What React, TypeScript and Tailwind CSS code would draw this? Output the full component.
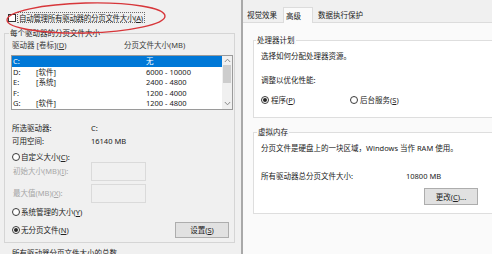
import React from "react";

const U = ({ c }: { c: string }) => <span className="underline">{c}</span>;

function Radio({ on }: { on?: boolean }) {
  return (
    <span className="flex h-[8px] w-[8px] shrink-0 items-center justify-center rounded-full border border-[#3a3a3a] bg-white">
      {on && <span className="h-[4px] w-[4px] rounded-full bg-[#262626]" />}
    </span>
  );
}

function Chevron({ up }: { up?: boolean }) {
  return (
    <svg width="7" height="5" viewBox="0 0 7 5">
      <polyline
        points={up ? "0.8,4 3.5,1.2 6.2,4" : "0.8,1 3.5,3.8 6.2,1"}
        fill="none"
        stroke="#8a8a8a"
        strokeWidth="1"
      />
    </svg>
  );
}

const rows = [
  { d: "C:", l: "", s: "无", sel: true },
  { d: "D:", l: "[软件]", s: "6000 - 10000" },
  { d: "E:", l: "[系统]", s: "2400 - 4800" },
  { d: "F:", l: "", s: "1200 - 4000" },
  { d: "G:", l: "[软件]", s: "1200 - 4800" },
];

export default function App() {
  return (
    <div className="flex h-[254px] w-[492px] overflow-hidden bg-[#f0f0f0] font-['Noto_Sans','Noto_Sans_CJK_SC',sans-serif] text-[7.5px] leading-[10px] whitespace-nowrap text-[#222222]">
      {/* Left panel: virtual memory dialog */}
      <div className="relative flex w-[241px] shrink-0 flex-col bg-[#f0f0f0] pt-[12px]">
        <div className="flex h-[11px] items-center pl-[8px]">
          <span className="h-[8px] w-[8px] shrink-0 border border-[#333] bg-white" />
          <span className="ml-[1px] flex h-[11px] items-center border border-dotted border-[#6b6b6b] px-[1px] tracking-[-0.3px]">
            自动管理所有驱动器的分页文件大小(<U c="A" />)
          </span>
        </div>

        <fieldset className="mt-[5px] ml-[4px] w-[231px] border border-[#d5d5d5] pb-[4px]">
          <legend className="ml-[4px] px-[1px] leading-[10px]">每个驱动器的分页文件大小</legend>
          <div className="mt-[2px] flex h-[10px] items-center pl-[7px] text-[#3a3a3a]">
            <span className="w-[112px]">
              驱动器 [卷标](<U c="D" />)
            </span>
            <span>分页文件大小(MB)</span>
          </div>

          <div className="mt-[5px] ml-[6px] flex w-[222px] border border-[#9a9a9a] bg-white">
            <div className="flex w-[210px] flex-col">
              {rows.map((r) => (
                <div
                  key={r.d}
                  className={
                    r.sel
                      ? "flex h-[10.5px] items-center bg-[#0078d7] text-white"
                      : "flex h-[10.5px] items-center"
                  }
                >
                  <span className="w-[24px] pl-[1px]">{r.d}</span>
                  <span className="w-[110px]">{r.l}</span>
                  <span>{r.s}</span>
                </div>
              ))}
            </div>
            <div className="flex w-[10px] flex-col items-center bg-[#f0f0f0]">
              <div className="flex h-[9px] items-center justify-center">
                <Chevron up />
              </div>
              <div className="h-[18px] w-[8px] bg-[#cdcdcd]" />
              <div className="flex-1" />
              <div className="flex h-[10px] items-center justify-center">
                <Chevron />
              </div>
            </div>
          </div>

          <div className="mt-[13px] flex h-[10px] items-center pl-[7px]">
            <span className="w-[79px]">所选驱动器:</span>
            <span>C:</span>
          </div>
          <div className="mt-[3px] flex h-[10px] items-center pl-[7px]">
            <span className="w-[79px]">可用空间:</span>
            <span>16140 MB</span>
          </div>

          <div className="mt-[7px] flex h-[9px] items-center gap-[1px] pl-[7px]">
            <Radio />
            <span>
              自定义大小(<U c="C" />):
            </span>
          </div>
          <div className="flex h-[19px] items-center pl-[8px] text-[#a6a6a6]">
            <span className="w-[78px]">
              初始大小(MB)(<U c="I" />):
            </span>
            <span className="h-[19px] w-[55px] border border-[#dadada] bg-[#f0f0f0]" />
          </div>
          <div className="mt-[3px] flex h-[19px] items-center pl-[8px] text-[#a6a6a6]">
            <span className="w-[78px]">
              最大值(MB)(<U c="X" />):
            </span>
            <span className="h-[19px] w-[55px] border border-[#dadada] bg-[#f0f0f0]" />
          </div>

          <div className="mt-[4px] flex h-[10px] items-center gap-[1px] pl-[7px]">
            <Radio />
            <span>
              系统管理的大小(<U c="Y" />)
            </span>
          </div>
          <div className="mt-[5px] flex h-[16px] items-center pr-[5px] pl-[7px]">
            <Radio on />
            <span className="ml-[1px] flex-1">
              无分页文件(<U c="N" />)
            </span>
            <span className="flex h-[16px] w-[54px] items-center justify-center border border-[#adadad] bg-[#e1e1e1]">
              设置(<U c="S" />)
            </span>
          </div>
        </fieldset>

        <div className="mt-[5px] h-[10px] pl-[12px]">所有驱动器分页文件大小的总数</div>

        {/* red annotation ellipse */}
        <svg className="pointer-events-none absolute top-0 left-0" width="175" height="40" viewBox="0 0 175 40">
          <ellipse
            cx="86"
            cy="18"
            rx="79"
            ry="15"
            fill="none"
            stroke="#d7363a"
            strokeWidth="1.4"
            transform="rotate(-1.5 86 18)"
          />
        </svg>
      </div>

      {/* Right panel: performance options */}
      <div className="flex flex-1 flex-col overflow-hidden border-l-2 border-[#a9a9a9] bg-[#fafafa]">
        <div className="flex h-[23px] shrink-0 items-end border-b border-[#dcdcdc] bg-[#f0f0f0] pl-[2px]">
          <div className="flex h-[14px] w-[38px] items-center pl-[2px]">视觉效果</div>
          <div className="-mb-[1px] flex h-[16px] w-[30px] items-center border border-b-0 border-[#dcdcdc] bg-[#fafafa] pl-[2px]">
            高级
          </div>
          <div className="flex h-[14px] items-center pl-[5px]">数据执行保护</div>
        </div>

        <div className="flex flex-col pl-[10px]">
          <fieldset className="mt-[12px] w-[260px] border border-[#dedede] bg-white pb-[12px]">
            <legend className="ml-[2px] bg-[#fafafa] px-[1px] leading-[10px]">处理器计划</legend>
            <div className="mt-[6px] h-[10px] pl-[7px]">选择如何分配处理器资源。</div>
            <div className="mt-[14px] h-[10px] pl-[7px]">调整以优化性能:</div>
            <div className="mt-[10px] flex h-[10px] items-center pl-[7px]">
              <Radio on />
              <span className="ml-[2px] w-[79px]">
                程序(<U c="P" />)
              </span>
              <Radio />
              <span className="ml-[2px]">
                后台服务(<U c="S" />)
              </span>
            </div>
          </fieldset>

          <fieldset className="mt-[9px] w-[260px] border border-[#dedede] bg-white pb-[8px]">
            <legend className="ml-[3px] bg-[#fafafa] px-[1px] leading-[10px]">虚拟内存</legend>
            <div className="mt-[6px] h-[10px] pl-[7px]">分页文件是硬盘上的一块区域，Windows 当作 RAM 使用。</div>
            <div className="mt-[18px] flex h-[10px] items-center pl-[7px]">
              <span className="w-[145px]">所有驱动器总分页文件大小:</span>
              <span>10800 MB</span>
            </div>
            <div className="mt-[7px] ml-[170px] flex h-[17px] w-[54px] items-center justify-center border border-[#adadad] bg-[#e1e1e1]">
              更改(<U c="C" />)...
            </div>
          </fieldset>
        </div>
      </div>
    </div>
  );
}
